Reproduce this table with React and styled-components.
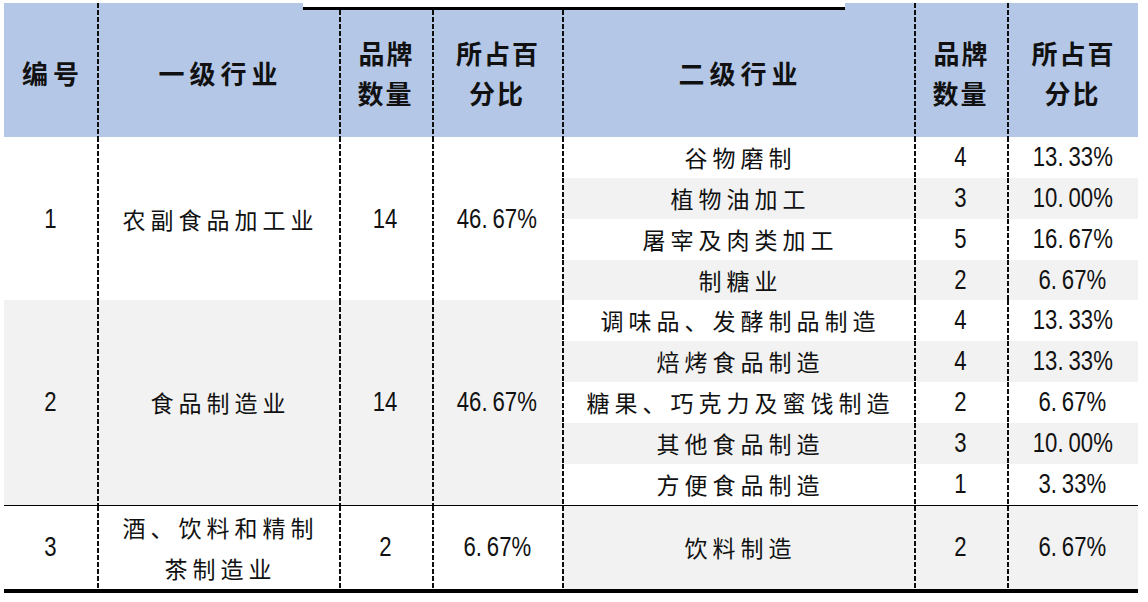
import React from 'react';
import styled, { createGlobalStyle, css } from 'styled-components';

const Global = createGlobalStyle`
  html, body { margin: 0; padding: 0; background: #ffffff; }
  body { font-family: "Noto Sans CJK SC", "Noto Sans", sans-serif; color: #111111; }
`;

const COLS = '93px 242px 93px 130px 352px 93px 131px';
const CJK = `"Noto Sans CJK SC", "Noto Sans", sans-serif`;
const NUM = `"Liberation Sans", Arial, sans-serif`;

const dashed = css`
  background-image: linear-gradient(to bottom, #0d0d0d 0, #0d0d0d 5px, transparent 5px, transparent 7px);
  background-size: 2px 7px;
  background-repeat: repeat-y;
  background-position: left top;
`;

const Page = styled.div`
  position: relative;
  padding: 3px 0 0 4px;
  width: 1134px;
`;

const TopRule = styled.div`
  position: absolute;
  left: 303px;
  top: 0;
  width: 542px;
  height: 7px;
  background: #ffffff;
  border-bottom: 3px solid #000;
  z-index: 2;
`;

const Header = styled.div`
  display: grid;
  grid-template-columns: ${COLS};
  height: 134px;
  background: #b4c7e7;
`;

const HeadCell = styled.div`
  display: flex;
  align-items: center;
  justify-content: center;
  text-align: center;
  padding-top: 6px;
  box-sizing: border-box;
  font-family: ${CJK};
  font-weight: 700;
  font-size: 26px;
  line-height: 40px;
  letter-spacing: ${p => (p.$wide ? 5 : 2)}px;
  text-indent: ${p => (p.$wide ? 5 : 2)}px;
  color: #111;
  ${p => p.$divider && dashed}
`;

const Group = styled.div`
  display: grid;
  grid-template-columns: ${COLS};
  grid-template-rows: repeat(${p => p.$rows}, 1fr);
  height: ${p => p.$height}px;
  box-sizing: border-box;
  border-bottom: ${p => p.$rule}px solid #000;
`;

const Cell = styled.div`
  display: flex;
  align-items: center;
  justify-content: center;
  text-align: center;
  background-color: ${p => (p.$shade ? '#f2f2f2' : '#ffffff')};
  grid-row: ${p => (p.$span ? `span ${p.$span}` : 'auto')};
  ${p => p.$divider && dashed}
`;

const Cjk = styled.span`
  font-family: ${CJK};
  font-size: 23px;
  line-height: 41px;
  letter-spacing: 5px;
  padding-left: 5px;
  color: #111;
`;

const Num = styled.span`
  display: inline-block;
  font-family: ${NUM};
  font-size: 27px;
  line-height: 41px;
  color: #111;
  transform: scaleX(0.82);
  white-space: nowrap;
`;

const Dot = styled.span`
  margin-right: 6px;
`;

const Figure = ({ v }) => {
  if (!v.includes('.')) return <Num>{v}</Num>;
  const [a, b] = v.split('.');
  return (
    <Num>
      {a}
      <Dot>.</Dot>
      {b}
    </Num>
  );
};

const groups = [
  {
    id: '1',
    name: ['农副食品加工业'],
    count: '14',
    pct: '46.67%',
    shade: false,
    height: 163,
    rule: 1,
    subs: [
      ['谷物磨制', '4', '13.33%'],
      ['植物油加工', '3', '10.00%'],
      ['屠宰及肉类加工', '5', '16.67%'],
      ['制糖业', '2', '6.67%'],
    ],
    subStart: false,
  },
  {
    id: '2',
    name: ['食品制造业'],
    count: '14',
    pct: '46.67%',
    shade: true,
    height: 206,
    rule: 1,
    subs: [
      ['调味品、发酵制品制造', '4', '13.33%'],
      ['焙烤食品制造', '4', '13.33%'],
      ['糖果、巧克力及蜜饯制造', '2', '6.67%'],
      ['其他食品制造', '3', '10.00%'],
      ['方便食品制造', '1', '3.33%'],
    ],
    subStart: false,
  },
  {
    id: '3',
    name: ['酒、饮料和精制', '茶制造业'],
    count: '2',
    pct: '6.67%',
    shade: false,
    height: 87,
    rule: 4,
    subs: [['饮料制造', '2', '6.67%']],
    subStart: true,
  },
];

export default function App() {
  return (
    <>
      <Global />
      <Page>
        <TopRule />
        <Header>
          <HeadCell $wide>编号</HeadCell>
          <HeadCell $wide $divider>一级行业</HeadCell>
          <HeadCell $divider>品牌<br />数量</HeadCell>
          <HeadCell $divider>所占百<br />分比</HeadCell>
          <HeadCell $wide $divider>二级行业</HeadCell>
          <HeadCell $divider>品牌<br />数量</HeadCell>
          <HeadCell $divider>所占百<br />分比</HeadCell>
        </Header>
        {groups.map(g => (
          <Group key={g.id} $rows={g.subs.length} $height={g.height} $rule={g.rule}>
            <Cell $span={g.subs.length} $shade={g.shade}>
              <Figure v={g.id} />
            </Cell>
            <Cell $span={g.subs.length} $shade={g.shade} $divider>
              <Cjk>
                {g.name.map((n, i) => (
                  <React.Fragment key={n}>
                    {i > 0 && <br />}
                    {n}
                  </React.Fragment>
                ))}
              </Cjk>
            </Cell>
            <Cell $span={g.subs.length} $shade={g.shade} $divider>
              <Figure v={g.count} />
            </Cell>
            <Cell $span={g.subs.length} $shade={g.shade} $divider>
              <Figure v={g.pct} />
            </Cell>
            {g.subs.map((s, i) => {
              const shade = g.subStart ? i % 2 === 0 : i % 2 === 1;
              return (
                <React.Fragment key={s[0]}>
                  <Cell $shade={shade} $divider>
                    <Cjk>{s[0]}</Cjk>
                  </Cell>
                  <Cell $shade={shade} $divider>
                    <Figure v={s[1]} />
                  </Cell>
                  <Cell $shade={shade} $divider>
                    <Figure v={s[2]} />
                  </Cell>
                </React.Fragment>
              );
            })}
          </Group>
        ))}
      </Page>
    </>
  );
}
